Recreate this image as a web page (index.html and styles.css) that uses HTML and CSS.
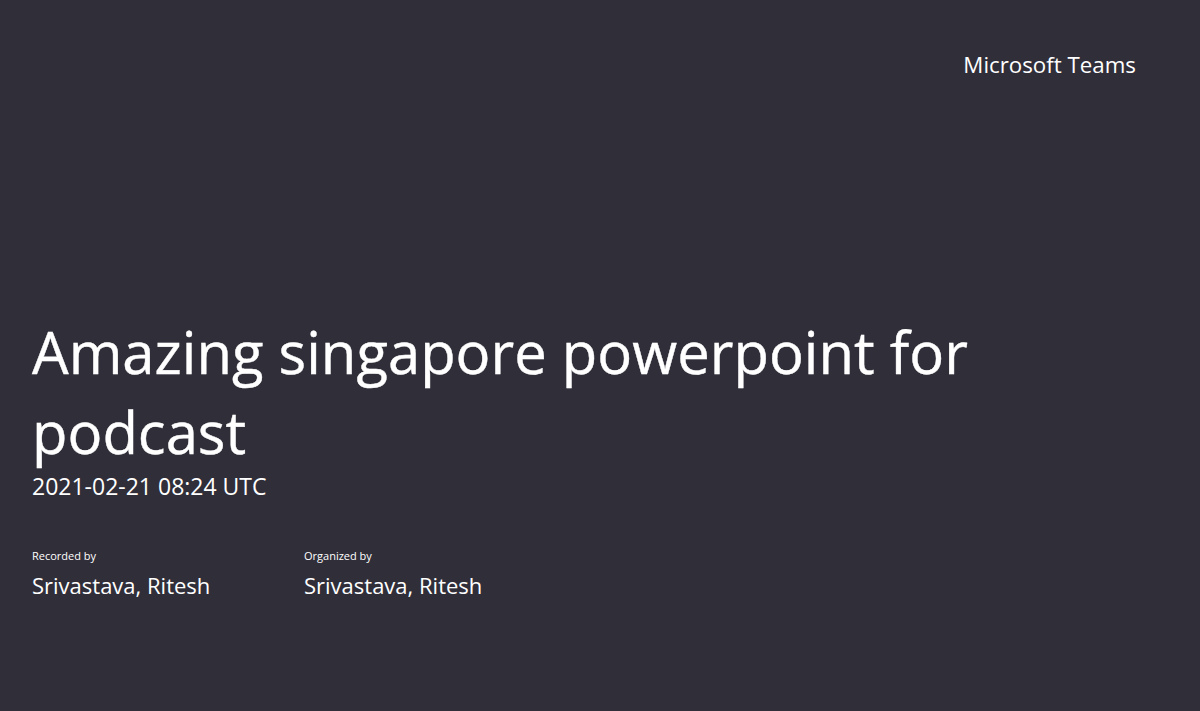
FILE: index.html
```html
<!DOCTYPE html>
<html lang="en">
<head>
    <meta charset="UTF-8">
    <meta name="viewport" content="width=device-width, initial-scale=1.0">
    <title>Recording</title>
    <link rel="stylesheet" href="styles.css">
</head>
<body>
    <div class="slate">
        <div class="brand">Microsoft Teams</div>

        <div class="details">
            <h1 class="title">Amazing singapore powerpoint for podcast</h1>
            <div class="date">2021-02-21 08:24 UTC</div>

            <div class="people">
                <div class="person">
                    <div class="label">Recorded by</div>
                    <div class="name">Srivastava, Ritesh</div>
                </div>
                <div class="person">
                    <div class="label">Organized by</div>
                    <div class="name">Srivastava, Ritesh</div>
                </div>
            </div>
        </div>
    </div>
</body>
</html>
```
FILE: styles.css
```css
body {
    margin: 0;
    background-color: #302e39;
    color: #ffffff;
    font-family: "Open Sans", "Noto Sans", sans-serif;
    overflow: hidden;
}

.slate {
    display: flex;
    flex-direction: column;
    height: 711px;
    padding: 0 64px 0 32px;
    box-sizing: border-box;
}

.brand {
    align-self: flex-end;
    margin-top: 50px;
    font-size: 22.3px;
    line-height: 30px;
}

.details {
    margin-top: 232px;
}

.title {
    margin: 0;
    max-width: 1000px;
    font-size: 58px;
    font-weight: 400;
    line-height: 80px;
    -webkit-text-stroke: 0.4px #ffffff;
}

.date {
    font-size: 23px;
    line-height: 28px;
}

.people {
    display: flex;
    margin-top: 48px;
}

.person {
    width: 272px;
}

.label {
    font-size: 11px;
    line-height: 16px;
}

.name {
    margin-top: 6px;
    font-size: 22px;
    line-height: 30px;
}
```
